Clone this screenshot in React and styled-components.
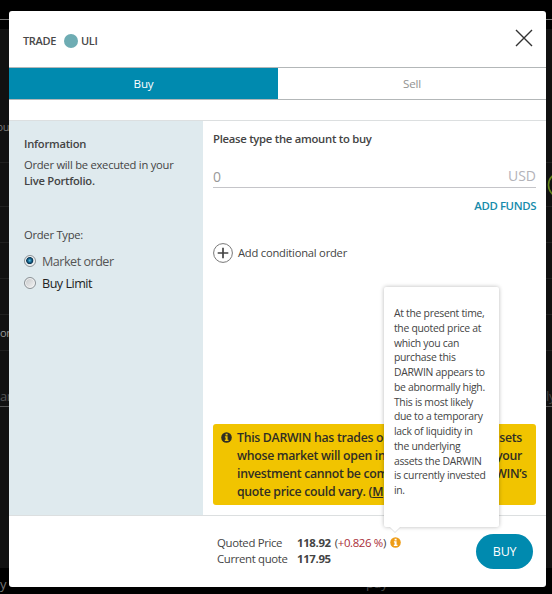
import React from "react";
import styled, { createGlobalStyle } from "styled-components";

const GlobalStyle = createGlobalStyle`
  * { box-sizing: border-box; }
  body { margin: 0; background: #000; font-family: "Open Sans", sans-serif; color: #444; }
`;

const Page = styled.div`
  display: grid;
  grid-template-columns: 9px 537px 6px;
  width: 552px;
  height: 594px;
  overflow: hidden;
`;

const Strip = styled.div`
  display: flex;
  flex-direction: column;
  overflow: hidden;
  height: 594px;
`;

const StripRow = styled.div`
  display: flex;
  flex: none;
  align-items: center;
  justify-content: ${(p) => p.$align || "flex-start"};
  height: ${(p) => p.$h}px;
  overflow: hidden;
  white-space: nowrap;
  background: ${(p) => p.$bg || "#111"};
  border-bottom: ${(p) => (p.$line ? `1px solid ${p.$line}` : "none")};
  color: ${(p) => p.$color || "#777"};
  font-size: ${(p) => p.$size || 11}px;
  letter-spacing: -0.4px;
  line-height: 16px;
  padding-top: ${(p) => p.$pad || 0}px;
`;

const Column = styled.div`
  display: flex;
  flex-direction: column;
  padding-top: 11px;
  overflow: hidden;
`;

const Modal = styled.main`
  display: flex;
  flex-direction: column;
  flex: none;
  height: 576px;
  border-radius: 3px;
  background: #fff;
`;

const BehindClip = styled.div`
  flex: none;
  height: 7px;
  overflow: hidden;
`;

const BehindText = styled.div`
  height: 16px;
  margin-top: -12px;
  padding-left: 357px;
  font-size: 13px;
  line-height: 16px;
  color: #484848;
`;

const Header = styled.header`
  display: flex;
  justify-content: space-between;
  align-items: flex-start;
  height: 56px;
  padding: 21px 13px 0 14px;
`;

const Title = styled.h1`
  display: flex;
  align-items: center;
  margin: 0;
  font-size: 11px;
  font-weight: 600;
  line-height: 17px;
  letter-spacing: -0.35px;
  color: #484848;
`;

const AssetDot = styled.span`
  width: 14px;
  height: 14px;
  margin: 1px 3px 0 8px;
  border-radius: 50%;
  background: #6eacb3;
`;

const CloseButton = styled.button`
  display: flex;
  margin-top: -3px;
  padding: 0;
  border: 0;
  background: none;
`;

const Tabs = styled.nav`
  display: grid;
  grid-template-columns: 269px 268px;
  height: 33px;
  border-top: 1px solid #b3b7b8;
  border-bottom: 1px solid #b3b7b8;
`;

const Tab = styled.button`
  border: 0;
  padding: 0;
  font: 400 11.6px/31px "Open Sans", sans-serif;
  letter-spacing: -0.2px;
  background: ${(p) => (p.$active ? "#008aaf" : "#fff")};
  color: ${(p) => (p.$active ? "#fff" : "#929292")};
`;

const Body = styled.div`
  display: grid;
  grid-template-columns: 194px 343px;
  height: 396px;
  margin-top: 20px;
  border-top: 1px solid #dcdfe0;
  border-bottom: 1px solid #dcdfe0;
`;

const Sidebar = styled.aside`
  padding: 15px 15px 0;
  background: #dfeaee;
  font-size: 11.2px;
  line-height: 16px;
  letter-spacing: -0.25px;
`;

const InfoTitle = styled.h2`
  margin: 0 0 5px;
  font-size: 11.2px;
  font-weight: 600;
  line-height: 16px;
`;

const InfoText = styled.p`
  margin: 0;
  white-space: nowrap;
  strong { font-weight: 600; }
`;

const OrderLabel = styled.div`
  margin: 38px 0 8px;
`;

const Option = styled.label`
  display: flex;
  align-items: center;
  gap: 6px;
  height: 22px;
  font-size: 12.6px;
  letter-spacing: -0.5px;
  color: ${(p) => p.$color};
`;

const Radio = styled.span`
  width: 12px;
  height: 12px;
  margin-top: -3px;
  border: 1px solid #8c9296;
  border-radius: 50%;
  box-shadow: inset 0 0 0 1px #f4f4f4;
  background: ${(p) =>
    p.$checked
      ? "radial-gradient(circle at 47% 45%, #65c6e7 0, #176c96 1.7px, #0a334f 3.2px, #dfe5e8 4px)"
      : "linear-gradient(135deg, #c3c6c8, #f5f5f5)"};
`;

const Content = styled.section`
  display: flex;
  flex-direction: column;
  padding: 9px 10px 10px;
`;

const Prompt = styled.h2`
  margin: 0;
  font-size: 11.3px;
  font-weight: 600;
  line-height: 18px;
  letter-spacing: -0.28px;
`;

const AmountField = styled.div`
  display: flex;
  justify-content: space-between;
  height: 23px;
  margin-top: 17px;
  border-bottom: 1px solid #c5c5c9;
  font-size: 14px;
  line-height: 24px;
  color: #999;
`;

const Currency = styled.span`
  color: #b3b3b9;
  font-size: 14px;
  line-height: 22px;
`;

const FundsLink = styled.a`
  align-self: flex-end;
  margin-top: 10px;
  font-size: 11.4px;
  font-weight: 600;
  line-height: 16px;
  letter-spacing: -0.4px;
  color: #168bab;
`;

const ConditionalButton = styled.button`
  display: flex;
  align-items: center;
  gap: 5px;
  align-self: flex-start;
  margin-top: 29px;
  padding: 0;
  border: 0;
  background: none;
  font: 400 11.2px/20px "Open Sans", sans-serif;
  letter-spacing: -0.22px;
  color: #444;
`;

const Notice = styled.div`
  display: flex;
  gap: 5px;
  height: 81px;
  margin-top: auto;
  padding: 5px 8px;
  border-radius: 3px;
  background: #f1c400;
  color: #302e24;
  font-size: 12.3px;
  font-weight: 600;
  line-height: 18px;
  letter-spacing: -0.3px;
  white-space: nowrap;
  svg { flex: none; margin-top: 3px; }
`;

const NoticeLine = styled.div`
  display: flex;
  justify-content: space-between;
  width: ${(p) => p.$w}px;
`;

const Footer = styled.footer`
  display: flex;
  justify-content: space-between;
  flex: 1;
  padding: 18px 13px 0 208px;
`;

const Quotes = styled.dl`
  display: grid;
  grid-template-columns: 80px auto;
  grid-auto-rows: 16px;
  margin: 1px 0 0;
  font-size: 11.4px;
  line-height: 16px;
  letter-spacing: -0.35px;
  dt, dd { margin: 0; }
  strong { font-weight: 700; }
`;

const QuoteValue = styled.dd`
  display: flex;
  align-items: center;
  gap: 4px;
  white-space: nowrap;
`;

const Change = styled.span`
  color: #a92e38;
`;

const InfoAnchor = styled.span`
  position: relative;
  display: flex;
  margin-top: -1px;
`;

const Tooltip = styled.div`
  position: absolute;
  left: -6px;
  bottom: 21px;
  z-index: 2;
  width: 115px;
  height: 240px;
  padding: 19px 0 0 10px;
  border-radius: 2px;
  background: #fff;
  box-shadow: 0 0 4px rgba(0, 0, 0, 0.28);
  font-size: 10.4px;
  line-height: 14.75px;
  letter-spacing: -0.27px;
  white-space: nowrap;
  color: #444;
  &::after {
    content: "";
    position: absolute;
    left: 5px;
    bottom: -5px;
    border: 6px solid transparent;
    border-top-color: #fff;
    border-bottom: 0;
    filter: drop-shadow(0 1px 0 #dcdcdc);
  }
`;

const BuyButton = styled.button`
  width: 57px;
  height: 35px;
  padding: 0;
  border: 0;
  border-radius: 18px;
  background: #008aaf;
  color: #fff;
  font: 400 12.5px/35px "Open Sans", sans-serif;
  letter-spacing: -0.3px;
`;

const InfoIcon = ({ color, hole }) => (
  <svg width="11" height="11" viewBox="0 0 11 11">
    <circle cx="5.5" cy="5.5" r="5.3" fill={color} />
    <path d="M4.6 1.8h2v1.6h-2zM3.9 4.3h2.7v3.4h.9V9H3.8V7.7h.8V5.5h-.7z" fill={hole} />
  </svg>
);

const ROW_LINE = "#202020";

const tooltipLines = [
  "At the present time,", "the quoted price at", "which you can", "purchase this",
  "DARWIN appears to", "be abnormally high.", "This is most likely", "due to a temporary",
  "lack of liquidity in", "the underlying", "assets the DARWIN", "is currently invested", "in.",
];

export default function App() {
  return (
    <>
      <GlobalStyle />
      <Page>
        <Strip>
          <StripRow $h={20} $bg="#000" $line="#777" />
          <StripRow $h={9} $bg="#000" />
          <StripRow $h={134} $line={ROW_LINE} $pad={62} $align="flex-end">ou</StripRow>
          <StripRow $h={44} $line={ROW_LINE} />
          <StripRow $h={36} $line={ROW_LINE} />
          <StripRow $h={36} $line={ROW_LINE} />
          <StripRow $h={36} $line={ROW_LINE} />
          <StripRow $h={36} $line={ROW_LINE} $color="#999">on</StripRow>
          <StripRow $h={56} $line="#555" $size={13} $pad={34} $color="#555">an</StripRow>
          <StripRow $h={161} />
          <StripRow $h={26} $bg="#000" $pad={5} $size={13}>y</StripRow>
        </Strip>
        <Column>
          <Modal>
            <Header>
              <Title>TRADE<AssetDot />ULI</Title>
              <CloseButton aria-label="Close">
                <svg width="18" height="18" viewBox="0 0 18 18" fill="none" stroke="#333" strokeWidth="1.4">
                  <path d="M1 1l16 16M17 1L1 17" />
                </svg>
              </CloseButton>
            </Header>
            <Tabs>
              <Tab $active>Buy</Tab>
              <Tab>Sell</Tab>
            </Tabs>
            <Body>
              <Sidebar>
                <InfoTitle>Information</InfoTitle>
                <InfoText>Order will be executed in your<br /><strong>Live Portfolio.</strong></InfoText>
                <OrderLabel>Order Type:</OrderLabel>
                <Option $color="#555"><Radio $checked />Market order</Option>
                <Option $color="#222"><Radio />Buy Limit</Option>
              </Sidebar>
              <Content>
                <Prompt>Please type the amount to buy</Prompt>
                <AmountField><span>0</span><Currency>USD</Currency></AmountField>
                <FundsLink>ADD FUNDS</FundsLink>
                <ConditionalButton>
                  <svg width="20" height="20" viewBox="0 0 20 20" fill="none">
                    <circle cx="10" cy="10" r="9.4" stroke="#777" />
                    <path d="M10 4.7v10.6M4.7 10h10.6" stroke="#444" strokeWidth="1.7" />
                  </svg>
                  Add conditional order
                </ConditionalButton>
                <Notice>
                  <InfoIcon color="#302e24" hole="#f1c400" />
                  <div>
                    <NoticeLine $w={285}><span>This DARWIN has trades o</span><span>sets</span></NoticeLine>
                    <NoticeLine $w={285}><span>whose market will open in</span><span>your</span></NoticeLine>
                    <NoticeLine $w={290}><span>investment cannot be com</span><span>WIN’s</span></NoticeLine>
                    <NoticeLine $w={285}><span>quote price could vary. (<u>M</u></span></NoticeLine>
                  </div>
                </Notice>
              </Content>
            </Body>
            <Footer>
              <Quotes>
                <dt>Quoted Price</dt>
                <QuoteValue>
                  <strong>118.92</strong>
                  <span>(<Change>+0.826 %</Change>)</span>
                  <InfoAnchor>
                    <InfoIcon color="#ee9c16" hole="#fff" />
                    <Tooltip>{tooltipLines.map((line) => <div key={line}>{line}</div>)}</Tooltip>
                  </InfoAnchor>
                </QuoteValue>
                <dt>Current quote</dt>
                <QuoteValue><strong>117.95</strong></QuoteValue>
              </Quotes>
              <BuyButton>BUY</BuyButton>
            </Footer>
          </Modal>
          <BehindClip><BehindText>pay</BehindText></BehindClip>
        </Column>
        <Strip>
          <StripRow $h={20} $bg="#000" $line="#777" />
          <StripRow $h={9} $bg="#000" />
          <StripRow $h={134} $line={ROW_LINE} />
          <StripRow $h={44} $line={ROW_LINE}>
            <svg width="6" height="28" viewBox="0 0 6 28">
              <circle cx="15" cy="14" r="12.5" fill="none" stroke="#63851b" strokeWidth="1.6" />
            </svg>
          </StripRow>
          <StripRow $h={36} $line={ROW_LINE} />
          <StripRow $h={36} $line={ROW_LINE} />
          <StripRow $h={36} $line={ROW_LINE} />
          <StripRow $h={36} $line={ROW_LINE} />
          <StripRow $h={56} $line="#555" $size={13} $pad={34} $color="#444">ly</StripRow>
          <StripRow $h={161} />
          <StripRow $h={26} $bg="#000" />
        </Strip>
      </Page>
    </>
  );
}
